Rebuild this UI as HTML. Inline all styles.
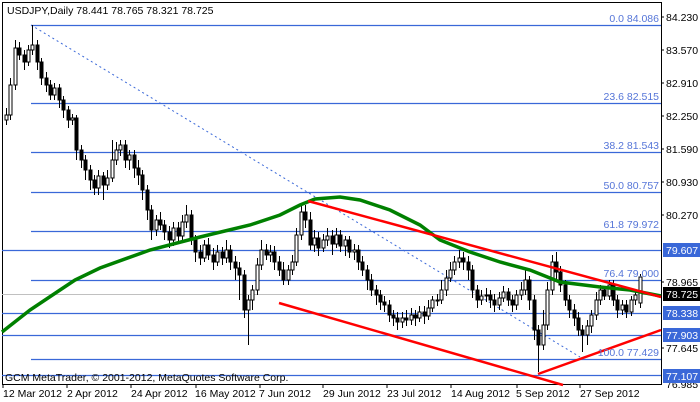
<!DOCTYPE html>
<html><head><meta charset="utf-8"><style>
body{margin:0;width:700px;height:402px;background:#fff;overflow:hidden;font-family:"Liberation Sans",sans-serif}
svg{display:block}
text{font-family:"Liberation Sans",sans-serif;font-size:10.5px}
</style></head><body>
<svg width="700" height="402" xmlns="http://www.w3.org/2000/svg">
<rect x="2.5" y="2.5" width="659" height="382" fill="#fff" stroke="#000"/>
<g stroke="#3a68d8" stroke-width="1.2">
<line x1="31" y1="25.5" x2="661" y2="25.5"/>
<line x1="31" y1="103.5" x2="661" y2="103.5"/>
<line x1="31" y1="152.5" x2="661" y2="152.5"/>
<line x1="31" y1="192.5" x2="661" y2="192.5"/>
<line x1="31" y1="231.5" x2="661" y2="231.5"/>
<line x1="2" y1="250.5" x2="661" y2="250.5"/>
<line x1="31" y1="280.5" x2="661" y2="280.5"/>
<line x1="2" y1="313.5" x2="661" y2="313.5"/>
<line x1="2" y1="335.5" x2="661" y2="335.5"/>
<line x1="31" y1="359.5" x2="661" y2="359.5"/>
<line x1="2" y1="375.5" x2="661" y2="375.5"/>
</g>
<line x1="2" y1="294.5" x2="661" y2="294.5" stroke="#c0c0c0"/>
<line x1="31" y1="25" x2="580" y2="357" stroke="#3a68d8" stroke-dasharray="2,3"/>
<path stroke="#000" fill="none" d="M6.5 108V125M10.5 78V120M15.5 40V90M19.5 42V60M24.5 50V70M28.5 45V66M32.5 25V55M37.5 40V70M41.5 58V85M46.5 72V92M50.5 80V100M54.5 83V100M59.5 84V108M63.5 96V118M68.5 106V128M72.5 114V125M76.5 115V160M81.5 145V168M85.5 155V180M90.5 165V190M94.5 175V195M98.5 170V195M103.5 172V200M107.5 170V190M112.5 140V182M116.5 142V165M120.5 140V156M125.5 140V168M129.5 150V170M134.5 150V178M138.5 160V185M142.5 170V200M147.5 185V220M151.5 205V240M156.5 215V236M160.5 212V230M164.5 220V240M169.5 226V248M173.5 222V246M178.5 222V242M182.5 215V240M186.5 205V228M191.5 210V245M195.5 235V262M200.5 245V265M204.5 240V262M208.5 238V260M213.5 248V270M217.5 245V266M222.5 247V265M226.5 240V263M230.5 245V270M235.5 256V280M239.5 262V300M244.5 270V318M248.5 295V345M252.5 285V310M257.5 258V295M261.5 240V270M266.5 244V260M270.5 245V262M274.5 246V270M279.5 256V276M283.5 262V285M288.5 265V285M292.5 255V275M296.5 228V266M301.5 205V240M305.5 205V228M310.5 212V250M314.5 230V252M318.5 232V256M323.5 234V252M327.5 228V246M332.5 230V255M336.5 228V248M340.5 230V252M345.5 236V256M349.5 236V258M354.5 244V260M358.5 245V270M362.5 256V276M367.5 265V290M371.5 274V296M376.5 285V305M380.5 290V310M384.5 296V312M389.5 300V322M393.5 310V326M397.5 312V330M402.5 312V328M406.5 310V326M411.5 308V325M415.5 310V326M419.5 306V322M424.5 306V324M428.5 300V320M432.5 296V312M437.5 294V306M441.5 280V304M446.5 270V296M450.5 262V282M454.5 256V275M459.5 250V268M463.5 252V270M468.5 256V280M472.5 265V298M477.5 285V308M481.5 290V305M486.5 288V302M490.5 290V308M494.5 294V312M499.5 292V310M503.5 286V302M508.5 288V306M512.5 295V312M516.5 290V310M521.5 282V300M525.5 268V295M529.5 276V310M534.5 295V340M538.5 325V372M543.5 310V350M547.5 282V330M552.5 255V295M556.5 252V280M560.5 266V292M565.5 280V306M569.5 295V318M574.5 304V326M578.5 312V336M582.5 325V352M587.5 320V345M591.5 310V333M596.5 292V320M600.5 285V305M604.5 286V300M609.5 280V300M613.5 280V306M617.5 295V318M622.5 300V315M626.5 300V318M631.5 296V316M635.5 290V305M640.5 274V308"/>
<g fill="#000" stroke="#000">
<rect x="18" y="48" width="3" height="7"/><rect x="23" y="55" width="3" height="7"/><rect x="36" y="45" width="3" height="17"/><rect x="40" y="62" width="3" height="16"/><rect x="45" y="78" width="3" height="7"/><rect x="49" y="85" width="3" height="10"/><rect x="58" y="88" width="3" height="12"/><rect x="62" y="100" width="3" height="10"/><rect x="67" y="110" width="3" height="10"/><rect x="75" y="118" width="3" height="32"/><rect x="80" y="150" width="3" height="10"/><rect x="84" y="160" width="3" height="10"/><rect x="89" y="170" width="3" height="10"/><rect x="93" y="180" width="3" height="8"/><rect x="102" y="176" width="3" height="9"/><rect x="124" y="145" width="3" height="15"/><rect x="133" y="155" width="3" height="13"/><rect x="137" y="168" width="3" height="7"/><rect x="141" y="175" width="3" height="15"/><rect x="146" y="190" width="3" height="20"/><rect x="150" y="210" width="3" height="20"/><rect x="159" y="220" width="3" height="5"/><rect x="163" y="225" width="3" height="7"/><rect x="168" y="232" width="3" height="8"/><rect x="177" y="228" width="3" height="8"/><rect x="190" y="215" width="3" height="25"/><rect x="194" y="240" width="3" height="12"/><rect x="199" y="252" width="3" height="6"/><rect x="207" y="245" width="3" height="10"/><rect x="212" y="255" width="3" height="7"/><rect x="221" y="252" width="3" height="6"/><rect x="229" y="250" width="3" height="12"/><rect x="234" y="262" width="3" height="6"/><rect x="238" y="268" width="3" height="7"/><rect x="243" y="275" width="3" height="35"/><rect x="265" y="250" width="3" height="5"/><rect x="273" y="252" width="3" height="10"/><rect x="278" y="262" width="3" height="8"/><rect x="282" y="270" width="3" height="10"/><rect x="304" y="212" width="3" height="8"/><rect x="309" y="220" width="3" height="25"/><rect x="317" y="238" width="3" height="10"/><rect x="331" y="236" width="3" height="8"/><rect x="339" y="235" width="3" height="11"/><rect x="348" y="240" width="3" height="12"/><rect x="357" y="250" width="3" height="12"/><rect x="361" y="262" width="3" height="8"/><rect x="366" y="270" width="3" height="10"/><rect x="370" y="280" width="3" height="10"/><rect x="375" y="290" width="3" height="5"/><rect x="379" y="295" width="3" height="7"/><rect x="383" y="302" width="3" height="3"/><rect x="388" y="305" width="3" height="10"/><rect x="392" y="315" width="3" height="3"/><rect x="396" y="318" width="3" height="4"/><rect x="405" y="318" width="3" height="2"/><rect x="414" y="315" width="3" height="3"/><rect x="423" y="312" width="3" height="4"/><rect x="436" y="300" width="3" height="1"/><rect x="462" y="258" width="3" height="4"/><rect x="467" y="262" width="3" height="8"/><rect x="471" y="270" width="3" height="20"/><rect x="476" y="290" width="3" height="10"/><rect x="489" y="295" width="3" height="5"/><rect x="493" y="300" width="3" height="5"/><rect x="507" y="292" width="3" height="8"/><rect x="511" y="300" width="3" height="5"/><rect x="528" y="280" width="3" height="20"/><rect x="533" y="300" width="3" height="30"/><rect x="537" y="330" width="3" height="15"/><rect x="555" y="262" width="3" height="10"/><rect x="559" y="272" width="3" height="13"/><rect x="564" y="285" width="3" height="15"/><rect x="568" y="300" width="3" height="10"/><rect x="573" y="310" width="3" height="8"/><rect x="577" y="318" width="3" height="12"/><rect x="581" y="330" width="3" height="5"/><rect x="603" y="290" width="3" height="6"/><rect x="612" y="285" width="3" height="15"/><rect x="616" y="300" width="3" height="10"/><rect x="625" y="305" width="3" height="7"/>
</g>
<g fill="#fff" stroke="#000">
<rect x="5" y="115" width="3" height="5"/><rect x="9" y="85" width="3" height="30"/><rect x="14" y="48" width="3" height="37"/><rect x="27" y="50" width="3" height="12"/><rect x="31" y="45" width="3" height="5"/><rect x="53" y="88" width="3" height="7"/><rect x="71" y="118" width="3" height="2"/><rect x="97" y="176" width="3" height="12"/><rect x="106" y="178" width="3" height="7"/><rect x="111" y="160" width="3" height="18"/><rect x="115" y="150" width="3" height="10"/><rect x="119" y="145" width="3" height="5"/><rect x="128" y="155" width="3" height="5"/><rect x="155" y="220" width="3" height="10"/><rect x="172" y="228" width="3" height="12"/><rect x="181" y="222" width="3" height="14"/><rect x="185" y="215" width="3" height="7"/><rect x="203" y="245" width="3" height="13"/><rect x="216" y="252" width="3" height="10"/><rect x="225" y="250" width="3" height="8"/><rect x="247" y="300" width="3" height="10"/><rect x="251" y="290" width="3" height="10"/><rect x="256" y="265" width="3" height="25"/><rect x="260" y="250" width="3" height="15"/><rect x="269" y="252" width="3" height="3"/><rect x="287" y="270" width="3" height="10"/><rect x="291" y="262" width="3" height="8"/><rect x="295" y="235" width="3" height="27"/><rect x="300" y="212" width="3" height="23"/><rect x="313" y="238" width="3" height="7"/><rect x="322" y="240" width="3" height="8"/><rect x="326" y="236" width="3" height="4"/><rect x="335" y="235" width="3" height="9"/><rect x="344" y="240" width="3" height="6"/><rect x="353" y="250" width="3" height="2"/><rect x="401" y="318" width="3" height="4"/><rect x="410" y="315" width="3" height="5"/><rect x="418" y="312" width="3" height="6"/><rect x="427" y="308" width="3" height="8"/><rect x="431" y="300" width="3" height="8"/><rect x="440" y="290" width="3" height="10"/><rect x="445" y="278" width="3" height="12"/><rect x="449" y="270" width="3" height="8"/><rect x="453" y="262" width="3" height="8"/><rect x="458" y="258" width="3" height="4"/><rect x="480" y="296" width="3" height="4"/><rect x="485" y="295" width="3" height="1"/><rect x="498" y="298" width="3" height="7"/><rect x="502" y="292" width="3" height="6"/><rect x="515" y="295" width="3" height="10"/><rect x="520" y="290" width="3" height="5"/><rect x="524" y="280" width="3" height="10"/><rect x="542" y="325" width="3" height="20"/><rect x="546" y="290" width="3" height="35"/><rect x="551" y="262" width="3" height="28"/><rect x="586" y="326" width="3" height="9"/><rect x="590" y="315" width="3" height="11"/><rect x="595" y="300" width="3" height="15"/><rect x="599" y="290" width="3" height="10"/><rect x="608" y="285" width="3" height="11"/><rect x="621" y="305" width="3" height="5"/><rect x="630" y="300" width="3" height="12"/><rect x="634" y="295" width="3" height="5"/><rect x="639" y="277" width="3" height="26"/>
</g>
<polyline fill="none" stroke="#008000" stroke-width="3.5" points="2,332 30,310 60,290 75,280 100,268 150,250 200,237 250,225 280,215 300,205 315,199 340,197 360,200 390,210 420,225 440,240 470,252 500,262 530,270 560,282 600,287 630,290 661,296"/>
<g stroke="#ff0000" stroke-width="2.5">
<line x1="308" y1="201" x2="661" y2="297"/>
<line x1="279" y1="303" x2="563" y2="385"/>
<line x1="538" y1="374" x2="661" y2="330"/>
</g>
<g fill="#5575d8" text-anchor="end">
<text x="659" y="22">0.0 84.086</text>
<text x="659" y="100">23.6 82.515</text>
<text x="659" y="149">38.2 81.543</text>
<text x="659" y="189">50.0 80.757</text>
<text x="659" y="228">61.8 79.972</text>
<text x="659" y="277">76.4 79.000</text>
<text x="659" y="356">100.0 77.429</text>
</g>
<text x="7" y="14" fill="#000">USDJPY,Daily  78.441 78.765 78.321 78.725</text>
<text x="5" y="381" fill="#000">GCM MetaTrader, © 2001-2012, MetaQuotes Software Corp.</text>
<g fill="#000">
<text x="666" y="21">84.230</text><text x="666" y="54">83.570</text><text x="666" y="87">82.910</text>
<text x="666" y="120">82.250</text><text x="666" y="153">81.590</text><text x="666" y="186">80.930</text>
<text x="666" y="219">80.270</text><text x="666" y="286">78.965</text><text x="666" y="352">77.645</text>
<text x="666" y="388">76.985</text>
</g>
<g stroke="#000">
<line x1="661" y1="17" x2="664" y2="17"/><line x1="661" y1="50" x2="664" y2="50"/><line x1="661" y1="83" x2="664" y2="83"/>
<line x1="661" y1="116" x2="664" y2="116"/><line x1="661" y1="149" x2="664" y2="149"/><line x1="661" y1="182" x2="664" y2="182"/>
<line x1="661" y1="215" x2="664" y2="215"/><line x1="661" y1="282" x2="664" y2="282"/><line x1="661" y1="348" x2="664" y2="348"/>
</g>
<rect x="663" y="243" width="37" height="14" fill="#3a68d8"/><text x="666" y="254" fill="#fff">79.607</text>
<rect x="663" y="287" width="37" height="14" fill="#000"/><text x="666" y="298" fill="#fff">78.725</text>
<rect x="663" y="306" width="37" height="14" fill="#3a68d8"/><text x="666" y="317" fill="#fff">78.338</text>
<rect x="663" y="328" width="37" height="14" fill="#3a68d8"/><text x="666" y="339" fill="#fff">77.903</text>
<rect x="663" y="369" width="37" height="14" fill="#3a68d8"/><text x="666" y="380" fill="#fff">77.107</text>
<g fill="#000">
<text x="3" y="397">12 Mar 2012</text><text x="67" y="397">2 Apr 2012</text><text x="131" y="397">24 Apr 2012</text>
<text x="195" y="397">16 May 2012</text><text x="259" y="397">7 Jun 2012</text><text x="323" y="397">29 Jun 2012</text>
<text x="387" y="397">23 Jul 2012</text><text x="451" y="397">14 Aug 2012</text><text x="516" y="397">5 Sep 2012</text>
<text x="580" y="397">27 Sep 2012</text>
</g>
<g stroke="#000">
<line x1="3" y1="384" x2="3" y2="388"/><line x1="67" y1="384" x2="67" y2="388"/><line x1="131" y1="384" x2="131" y2="388"/>
<line x1="196" y1="384" x2="196" y2="388"/><line x1="260" y1="384" x2="260" y2="388"/><line x1="323" y1="384" x2="323" y2="388"/>
<line x1="387" y1="384" x2="387" y2="388"/><line x1="451" y1="384" x2="451" y2="388"/><line x1="517" y1="384" x2="517" y2="388"/>
<line x1="580" y1="384" x2="580" y2="388"/>
</g>
</svg>
</body></html>
